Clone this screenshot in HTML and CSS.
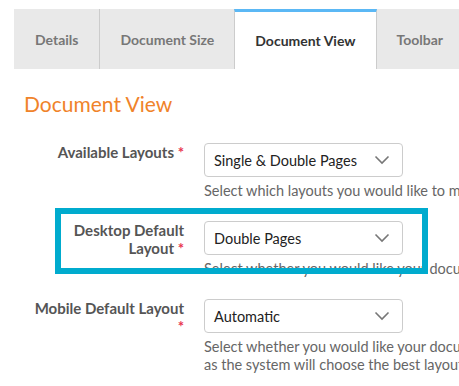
FILE: index.html
```html
<!DOCTYPE html>
<html lang="en">
<head>
  <meta charset="UTF-8">
  <title>Document Settings</title>
  <link rel="stylesheet" href="styles.css">
</head>
<body>
  <div class="page">
    <!-- Settings tabs -->
    <div class="tabs">
      <div class="tab">Details</div>
      <div class="tab">Document Size</div>
      <div class="tab active">Document View</div>
      <div class="tab">Toolbar</div>
      <div class="tab">Sharing</div>
    </div>

    <h2 class="section-title">Document View</h2>

    <div class="form">
      <div class="row">
        <label class="label">Available Layouts <span class="req">*</span></label>
        <div class="field">
          <div class="select">
            <span>Single &amp; Double Pages</span>
            <svg width="16" height="10" viewBox="0 0 16 10"><path d="M1.5 1.5 L8 8 L14.5 1.5" fill="none" stroke="#777" stroke-width="1.6"/></svg>
          </div>
          <p class="help">Select which layouts you would like to make available to your readers.</p>
        </div>
      </div>

      <div class="row">
        <label class="label">Desktop Default Layout <span class="req">*</span></label>
        <div class="field">
          <div class="select">
            <span>Double Pages</span>
            <svg width="16" height="10" viewBox="0 0 16 10"><path d="M1.5 1.5 L8 8 L14.5 1.5" fill="none" stroke="#777" stroke-width="1.6"/></svg>
          </div>
          <p class="help">Select whether you would like your document to open on desktop.</p>
        </div>
        <!-- annotation box -->
        <div class="highlight"></div>
      </div>

      <div class="row">
        <label class="label">Mobile Default Layout <span class="req">*</span></label>
        <div class="field">
          <div class="select">
            <span>Automatic</span>
            <svg width="16" height="10" viewBox="0 0 16 10"><path d="M1.5 1.5 L8 8 L14.5 1.5" fill="none" stroke="#777" stroke-width="1.6"/></svg>
          </div>
          <p class="help">Select whether you would like your document to open with one or two pages on mobile,<br>as the system will choose the best layout for each device.</p>
        </div>
      </div>
    </div>
  </div>
</body>
</html>
```

FILE: styles.css
```css
body {
  margin: 0;
  font-family: Lato, "Noto Sans", sans-serif;
  background: #fff;
  overflow: hidden;
}
.page {
  width: 760px;
  padding: 9px 0 0 14px;
}
.tabs {
  display: flex;
  background-color: #e9e9e9;
  height: 60px;
}
.tab {
  display: flex;
  align-items: center;
  padding: 0 20px;
  font-size: 14px;
  font-weight: bold;
  color: #777;
  border-right: 1px solid #ccc;
  flex-shrink: 0;
}
.tab:first-child {
  padding: 0 21px;
}
.tab.active {
  background-color: #fff;
  color: #333;
  border-left: 1px solid #ccc;
  border-top: 3px solid #5bb8f5;
  margin-left: -1px;
}
.section-title {
  margin: 22px 0 0 10px;
  font-size: 21px;
  font-weight: normal;
  line-height: 26px;
  color: #f0832a;
}
.form {
  margin-top: 26px;
}
.row {
  position: relative;
  display: grid;
  grid-template-columns: 170px 480px;
  column-gap: 20px;
  margin-bottom: 21px;
}
.label {
  text-align: right;
  font-size: 15px;
  font-weight: bold;
  line-height: 18px;
  color: #555;
  padding-left: 18px;
}
.req {
  color: #e8344f;
}
.select {
  display: flex;
  align-items: center;
  justify-content: space-between;
  box-sizing: border-box;
  width: 199px;
  height: 34px;
  padding: 0 12px 0 9px;
  border: 1px solid #ccc;
  border-radius: 4px;
  font-size: 14.5px;
  color: #222;
}
.help {
  margin: 5px 0 0;
  font-size: 14.5px;
  line-height: 18px;
  color: #666;
  white-space: nowrap;
}
.highlight {
  position: absolute;
  left: 41px;
  top: -13px;
  width: 361px;
  height: 54px;
  border: 6px solid #00abce;
}
```
